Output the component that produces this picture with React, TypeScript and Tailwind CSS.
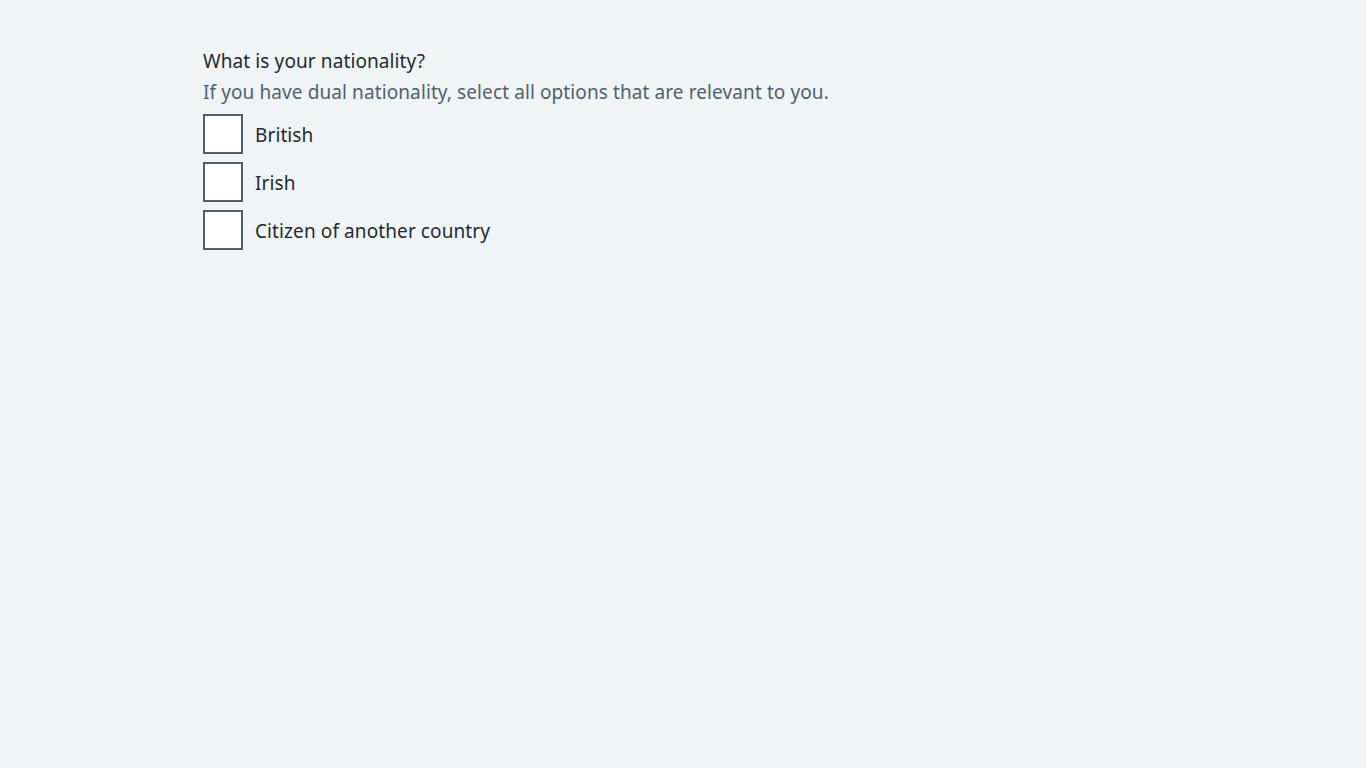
import React from "react";

const options = ["British", "Irish", "Citizen of another country"];

export default function App() {
  return (
    <div
      className="min-h-[768px] w-full bg-[#f0f4f5] text-[#212b32] tracking-[0.1px]"
      style={{ fontFamily: '"Noto Sans", Arial, sans-serif' }}
    >
      <div className="mx-auto max-w-[960px] pt-[47px]">
        <fieldset>
          <legend className="mb-[3px] text-[19px] leading-[28px] text-[#212b32]">
            What is your nationality?
          </legend>
          <div className="mb-[8px] text-[19px] leading-[28px] text-[#4c6272]">
            If you have dual nationality, select all options that are relevant to you.
          </div>
          <div className="flex flex-col gap-[8px]">
            {options.map((o) => (
              <label key={o} className="flex items-center gap-[12px]">
                <span className="box-border block h-[40px] w-[40px] shrink-0 border-2 border-[#4c6272] bg-white" />
                <span className="pt-[2px] text-[19px] leading-[28px] text-[#212b32]">{o}</span>
              </label>
            ))}
          </div>
        </fieldset>
      </div>
    </div>
  );
}
